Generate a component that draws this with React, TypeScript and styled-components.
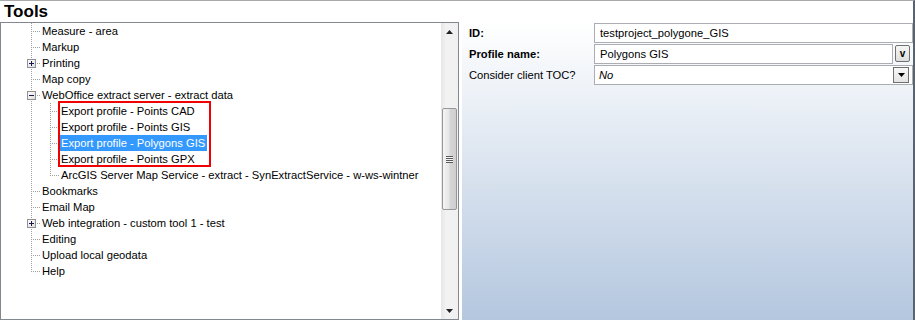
import React from "react";
import styled, { createGlobalStyle, css } from "styled-components";

type TreeRow = {
  label: string;
  guides: boolean[];
  last?: boolean;
  expander?: "plus" | "minus";
  selected?: boolean;
};

const L1 = [false];
const L2 = [false, true];

const rows: TreeRow[] = [
  { label: "Measure - area", guides: L1 },
  { label: "Markup", guides: L1 },
  { label: "Printing", guides: L1, expander: "plus" },
  { label: "Map copy", guides: L1 },
  { label: "WebOffice extract server - extract data", guides: L1, expander: "minus" },
  { label: "Export profile - Points CAD", guides: L2 },
  { label: "Export profile - Points GIS", guides: L2 },
  { label: "Export profile - Polygons GIS", guides: L2, selected: true },
  { label: "Export profile - Points GPX", guides: L2 },
  { label: "ArcGIS Server Map Service - extract - SynExtractService - w-ws-wintner", guides: L2, last: true },
  { label: "Bookmarks", guides: L1 },
  { label: "Email Map", guides: L1 },
  { label: "Web integration - custom tool 1 - test", guides: L1, expander: "plus" },
  { label: "Editing", guides: L1 },
  { label: "Upload local geodata", guides: L1 },
  { label: "Help", guides: L1, last: true },
];

const App = () => {
  return (
    <>
      <GlobalStyle />
      <Window>
        <Header>Tools</Header>
        <Body>
          <TreePanel>
            <TreeContent>
              {rows.map((row) => (
                <Row key={row.label}>
                  {row.guides.map((g, i) => (
                    <Cell key={i} $up={g} $down={g} />
                  ))}
                  <Cell $up $down={!row.last} $arm>
                    {row.expander && <Expander kind={row.expander} />}
                  </Cell>
                  <NodeLabel $selected={row.selected}>{row.label}</NodeLabel>
                </Row>
              ))}
              <Highlight />
            </TreeContent>
            <ScrollBar>
              <ArrowButton>
                <svg width="7" height="4" viewBox="0 0 7 4">
                  <path d="M3.5 0 L7 4 L0 4 Z" fill="#222" />
                </svg>
              </ArrowButton>
              <Track>
                <Thumb $offset={68} $size={102}>
                  <Grip />
                </Thumb>
              </Track>
              <ArrowButton>
                <svg width="7" height="4" viewBox="0 0 7 4">
                  <path d="M0 0 L7 0 L3.5 4 Z" fill="#222" />
                </svg>
              </ArrowButton>
            </ScrollBar>
          </TreePanel>
          <PropertyPanel>
            <PropGrid>
              <PropLabel $bold>ID:</PropLabel>
              <Field>
                <TextBox>testproject_polygone_GIS</TextBox>
              </Field>
              <PropLabel $bold>Profile name:</PropLabel>
              <Field>
                <TextBox>Polygons GIS</TextBox>
                <SmallButton>v</SmallButton>
              </Field>
              <PropLabel>Consider client TOC?</PropLabel>
              <Field>
                <Combo>
                  <ComboValue>No</ComboValue>
                  <DropButton>
                    <svg width="7" height="4" viewBox="0 0 7 4">
                      <path d="M0 0 L7 0 L3.5 4 Z" fill="#000" />
                    </svg>
                  </DropButton>
                </Combo>
              </Field>
            </PropGrid>
          </PropertyPanel>
        </Body>
      </Window>
    </>
  );
};

export default App;

const Expander = ({ kind }: { kind: "plus" | "minus" }) => (
  <ExpanderBox width="9" height="9" viewBox="0 0 9 9">
    <defs>
      <linearGradient id="exp-bg" x1="0" y1="0" x2="1" y2="1">
        <stop offset="0" stopColor="#ffffff" />
        <stop offset="1" stopColor="#dcdcdc" />
      </linearGradient>
    </defs>
    <rect x="0.5" y="0.5" width="8" height="8" fill="url(#exp-bg)" stroke="#919191" />
    <path d="M2 4.5 H7" stroke="#1a1a50" strokeWidth="1" />
    {kind === "plus" && <path d="M4.5 2 V7" stroke="#1a1a50" strokeWidth="1" />}
  </ExpanderBox>
);

const GlobalStyle = createGlobalStyle`
  html, body {
    margin: 0;
    padding: 0;
    background: #ffffff;
  }
  body {
    font-family: "Liberation Sans", Arial, sans-serif;
  }
`;

const Window = styled.div`
  width: 915px;
  height: 320px;
  box-sizing: border-box;
  display: flex;
  flex-direction: column;
  border-top: 1px solid #a9a9a9;
  border-right: 2px solid #5b6270;
  background: #ffffff;
  overflow: hidden;
`;

const Header = styled.div`
  height: 21px;
  flex: none;
  padding-left: 4px;
  font-size: 17px;
  font-weight: bold;
  line-height: 21px;
  color: #000;
`;

const Body = styled.div`
  flex: 1;
  display: flex;
  gap: 3px;
  min-height: 0;
`;

const TreePanel = styled.div`
  position: relative;
  width: 459px;
  flex: none;
  box-sizing: border-box;
  border: 1px solid #828790;
  display: flex;
  background: #ffffff;
`;

const TreeContent = styled.div`
  position: relative;
  flex: 1;
  padding-left: 2px;
  overflow: hidden;
`;

const Row = styled.div`
  height: 16px;
  display: flex;
  align-items: center;
  white-space: nowrap;
`;

const dots = (dir: string) =>
  `repeating-linear-gradient(${dir}, #a0a0a0 0 1px, transparent 1px 2px)`;

const Cell = styled.span<{ $up?: boolean; $down?: boolean; $arm?: boolean }>`
  flex: none;
  width: 19px;
  height: 16px;
  display: flex;
  align-items: center;
  background-repeat: no-repeat;
  ${({ $up, $down, $arm }) => {
    const images: string[] = [];
    const positions: string[] = [];
    const sizes: string[] = [];
    if ($up && $down) {
      images.push(dots("to bottom"));
      positions.push("9px 0");
      sizes.push("1px 16px");
    } else if ($up) {
      images.push(dots("to bottom"));
      positions.push("9px 0");
      sizes.push("1px 9px");
    }
    if ($arm) {
      images.push(dots("to right"));
      positions.push("11px 8px");
      sizes.push("8px 1px");
    }
    if (!images.length) return "";
    return css`
      background-image: ${images.join(", ")};
      background-position: ${positions.join(", ")};
      background-size: ${sizes.join(", ")};
    `;
  }}
`;

const ExpanderBox = styled.svg`
  display: block;
  margin-left: 5px;
  margin-top: 1px;
`;

const NodeLabel = styled.span<{ $selected?: boolean }>`
  padding: 0 2px 0 1px;
  height: 16px;
  font-size: 11.2px;
  line-height: 16px;
  color: ${({ $selected }) => ($selected ? "#ffffff" : "#000000")};
  background: ${({ $selected }) => ($selected ? "#3399ff" : "transparent")};
`;

const Highlight = styled.div`
  position: absolute;
  left: 57px;
  top: 78px;
  width: 153px;
  height: 66px;
  box-sizing: border-box;
  border: 2px solid #f00000;
  pointer-events: none;
`;

const ScrollBar = styled.div`
  width: 17px;
  flex: none;
  display: flex;
  flex-direction: column;
  background: linear-gradient(to right, #e6e6e6, #f2f2f2 30%, #f0f0f0);
`;

const ArrowButton = styled.div`
  height: 17px;
  flex: none;
  display: flex;
  align-items: center;
  justify-content: center;
`;

const Track = styled.div`
  flex: 1;
  display: flex;
  flex-direction: column;
`;

const Thumb = styled.div<{ $offset: number; $size: number }>`
  margin-top: ${({ $offset }) => $offset}px;
  height: ${({ $size }) => $size}px;
  margin-left: 1px;
  width: 15px;
  box-sizing: border-box;
  border: 1px solid #979797;
  border-radius: 2px;
  background: linear-gradient(to right, #f4f4f4, #e6e6e6 45%, #d5d5d5 55%, #cfcfcf);
  display: flex;
  align-items: center;
  justify-content: center;
`;

const Grip = styled.div`
  width: 7px;
  height: 7px;
  background: repeating-linear-gradient(to bottom, #5a5a5a 0 1px, #f4f4f4 1px 2px);
`;

const PropertyPanel = styled.div`
  flex: 1;
  background: linear-gradient(to bottom, #ffffff 0%, #b4c7df 100%);
`;

const PropGrid = styled.div`
  display: grid;
  grid-template-columns: 132px 1fr;
  grid-auto-rows: 20px;
  row-gap: 1px;
  padding-top: 1px;
`;

const PropLabel = styled.div<{ $bold?: boolean }>`
  padding-left: 7px;
  font-size: 11.2px;
  line-height: 20px;
  font-weight: ${({ $bold }) => ($bold ? "bold" : "normal")};
  color: #000;
  white-space: nowrap;
`;

const Field = styled.div`
  display: flex;
  align-items: flex-start;
  min-width: 0;
`;

const TextBox = styled.div`
  flex: 1;
  height: 20px;
  box-sizing: border-box;
  border: 1px solid #abadb3;
  background: #ffffff;
  padding-left: 5px;
  font-size: 11.2px;
  line-height: 18px;
  color: #000;
`;

const SmallButton = styled.div`
  flex: none;
  width: 15px;
  height: 17px;
  margin: 1px 3px 0 2px;
  box-sizing: border-box;
  border: 1px solid #707070;
  border-radius: 2px;
  background: linear-gradient(to bottom, #f6f6f6, #dedede);
  font-size: 10px;
  font-weight: bold;
  line-height: 15px;
  text-align: center;
  color: #000;
`;

const Combo = styled.div`
  flex: 1;
  height: 20px;
  box-sizing: border-box;
  border: 1px solid #abadb3;
  background: #ffffff;
  display: flex;
  align-items: center;
`;

const ComboValue = styled.div`
  flex: 1;
  padding-left: 4px;
  font-size: 11.2px;
  font-style: italic;
  color: #000;
`;

const DropButton = styled.div`
  flex: none;
  width: 16px;
  height: 16px;
  margin-right: 3px;
  box-sizing: border-box;
  border: 1px solid #707070;
  background: linear-gradient(to bottom, #f7f7f7, #e3e3e3);
  display: flex;
  align-items: center;
  justify-content: center;
`;
